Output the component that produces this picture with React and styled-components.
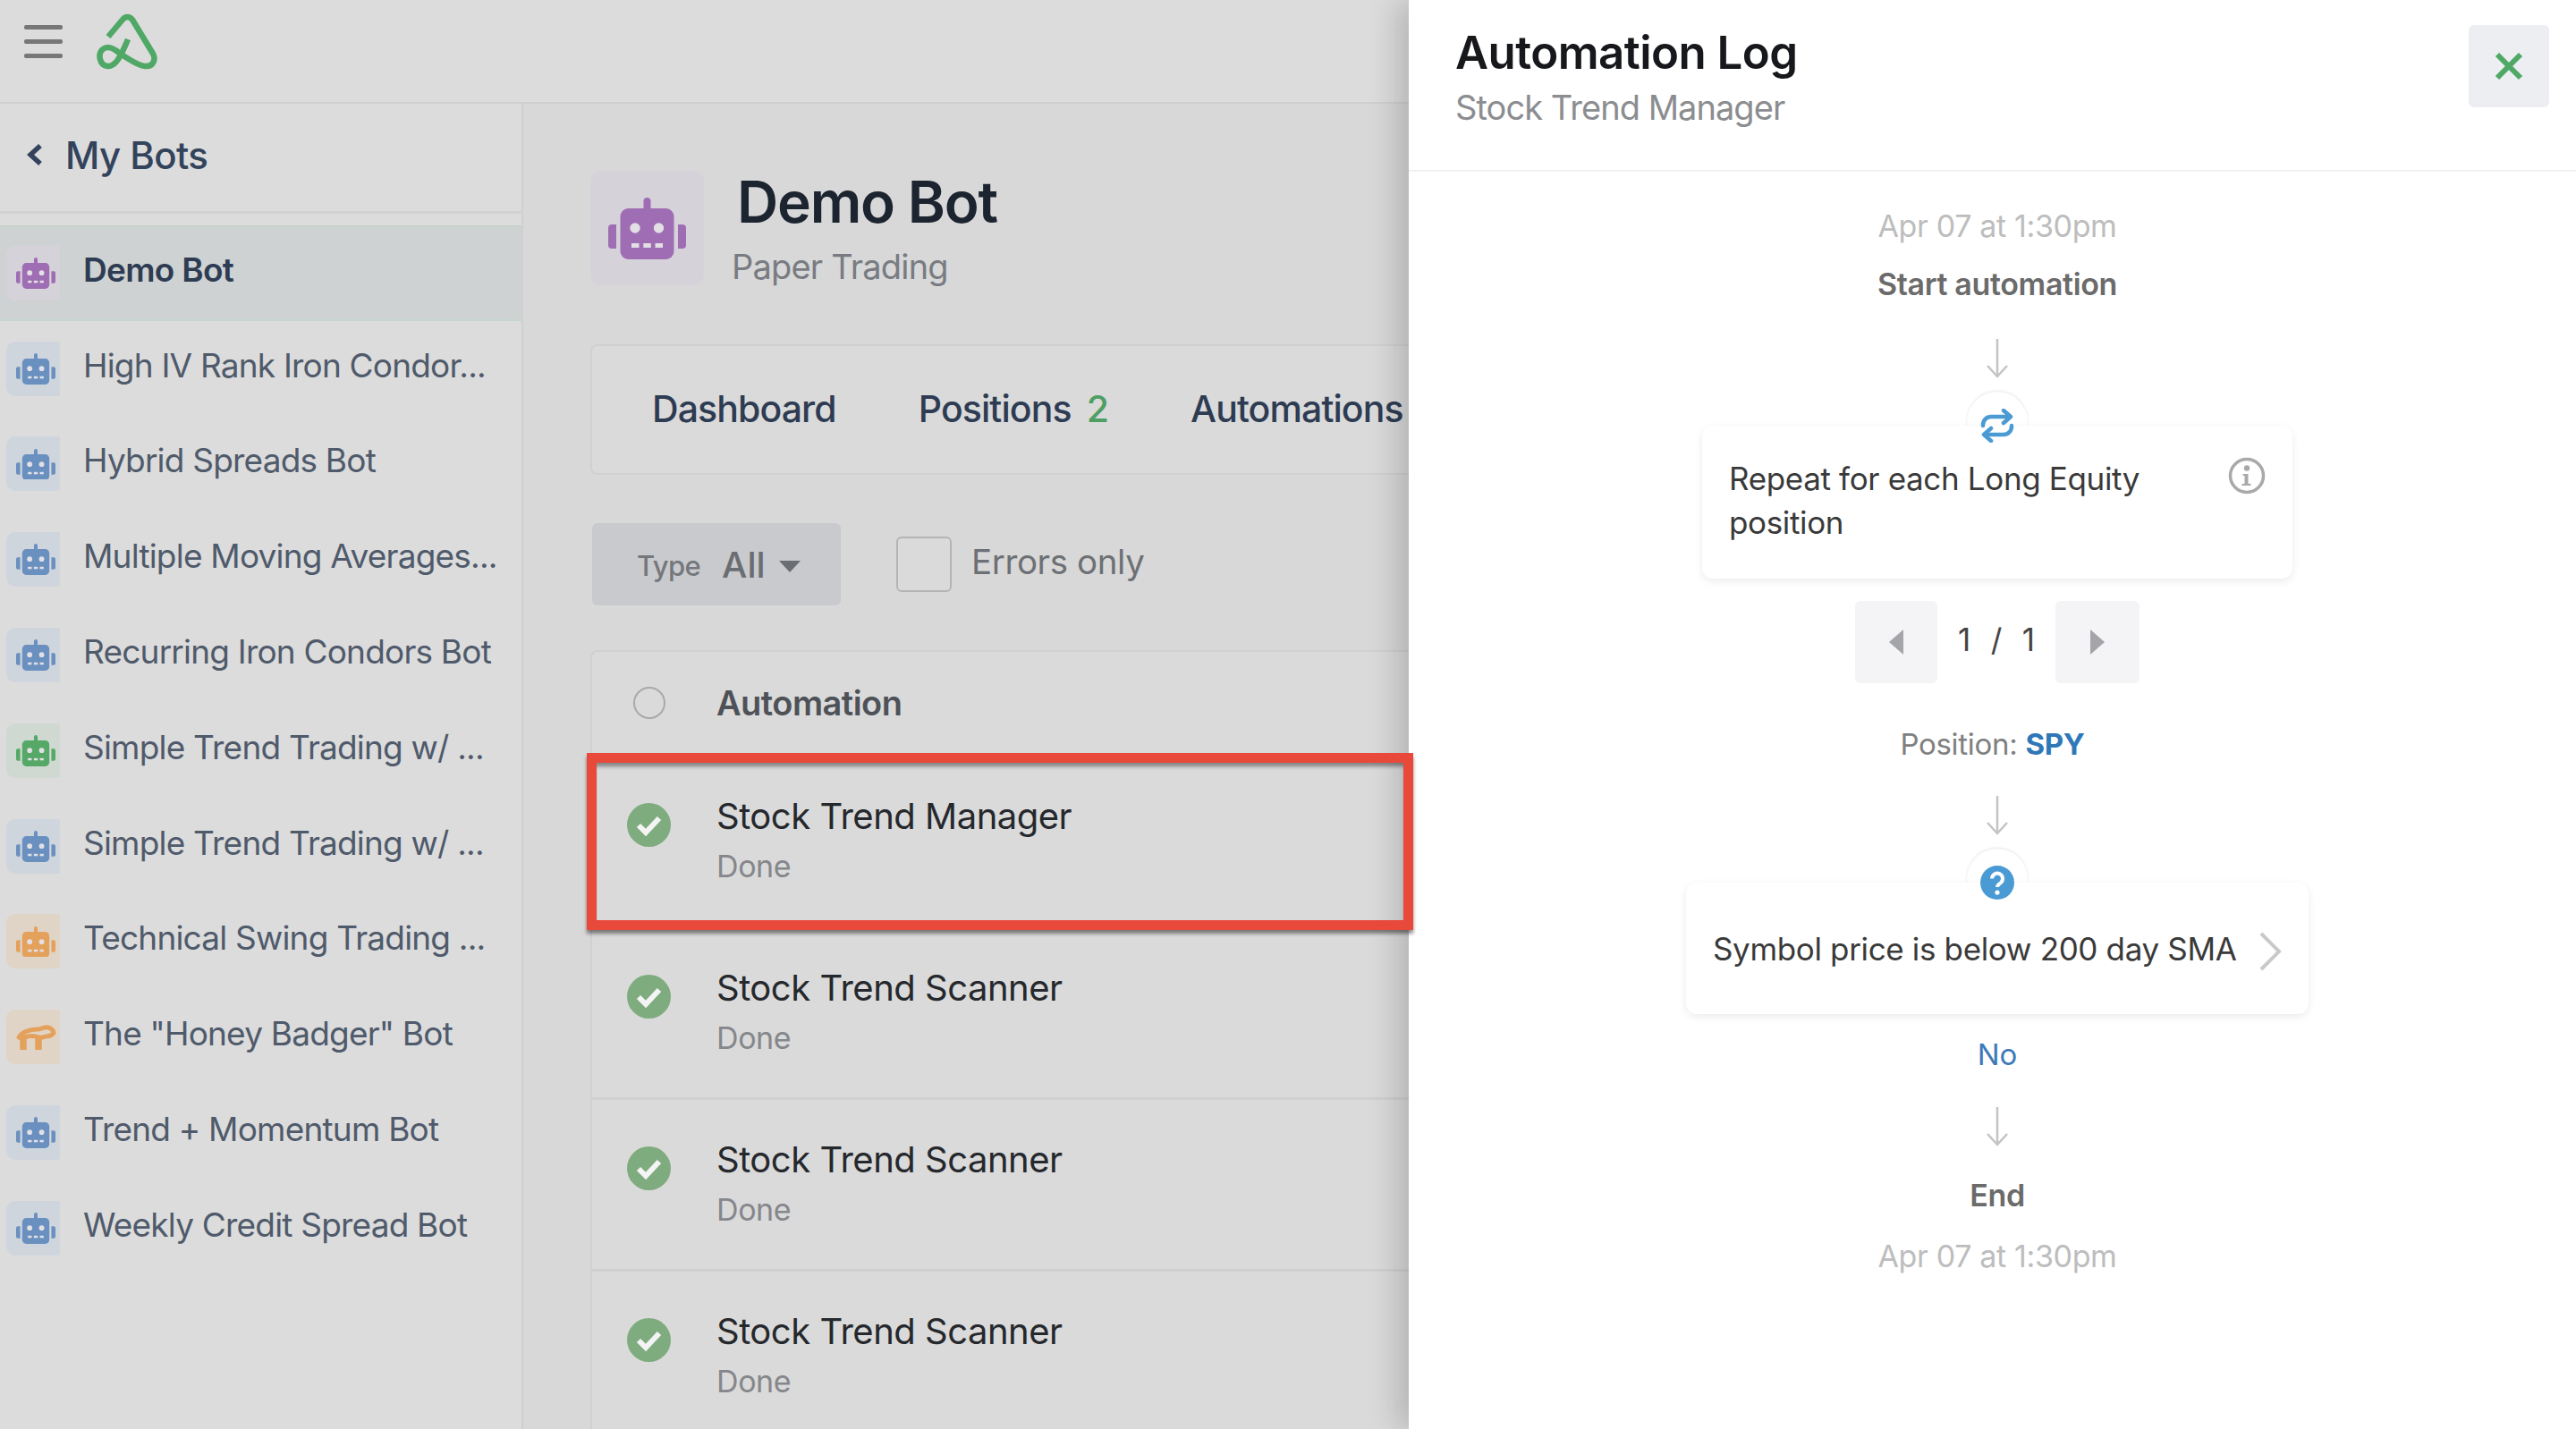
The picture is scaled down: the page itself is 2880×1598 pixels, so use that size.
import React from "react";
import styled, { createGlobalStyle } from "styled-components";

const GlobalStyle = createGlobalStyle`
  html, body { margin: 0; padding: 0; }
  body { font-family: "Inter", "Liberation Sans", sans-serif; background: #d8d8d8; }
  * { box-sizing: border-box; }
`;

const Page = styled.div`
  position: relative;
  width: 2880px;
  height: 1598px;
  overflow: hidden;
  display: flex;
  flex-direction: column;
  background: #d8d8d8;
`;

/* ---------- top bar ---------- */
const TopBar = styled.header`
  flex: none;
  height: 116px;
  display: flex;
  align-items: flex-start;
  background: #dcdcdc;
  border-bottom: 2px solid #cfcfcf;
  padding: 15px 0 0 27px;
  gap: 38px;
`;
const Burger = styled.div`
  width: 43px;
  margin-top: 13px;
  display: flex;
  flex-direction: column;
  gap: 11px;
  span { display: block; height: 5px; border-radius: 2px; background: #777; }
`;

/* ---------- layout ---------- */
const Body = styled.div`
  flex: 1;
  display: flex;
  min-height: 0;
`;
const Sidebar = styled.aside`
  flex: none;
  width: 585px;
  background: #dcdcdc;
  border-right: 2px solid #d0d0d0;
`;
const BackRow = styled.div`
  height: 123px;
  display: flex;
  align-items: center;
  gap: 25px;
  padding: 0 0 6px 30px;
  border-bottom: 3px solid #d2d2d2;
  color: #33435c;
  font-size: 42px;
  font-weight: 500;
  letter-spacing: -0.6px;
`;
const BotList = styled.div`
  padding-top: 13px;
  display: flex;
  flex-direction: column;
`;
const BotRow = styled.div`
  height: 106.8px;
  flex: none;
  display: flex;
  align-items: center;
  gap: 26px;
  padding-left: 7px;
  background: ${(p) => (p.$active ? "#ced2d3" : "transparent")};
  border-top: ${(p) => (p.$active ? "2px solid #c5d3cc" : "none")};
  border-bottom: ${(p) => (p.$active ? "2px solid #c5d6cd" : "none")};
  color: ${(p) => (p.$active ? "#2e3c53" : "#4f5a6b")};
  font-size: 37px;
  font-weight: ${(p) => (p.$active ? 600 : 400)};
  letter-spacing: ${(p) => (p.$active ? "-0.7px" : "-0.8px")};
  white-space: nowrap;
`;
const BotLabel = styled.span`
  padding-bottom: 8px;
`;
const Tile = styled.div`
  flex: none;
  width: ${(p) => (p.$big ? "127px" : "60px")};
  height: ${(p) => (p.$big ? "128px" : "61px")};
  border-radius: ${(p) => (p.$big ? "12px" : "10px 3px 3px 10px")};
  padding-left: ${(p) => (p.$big ? "0" : "6px")};
  display: flex;
  align-items: center;
  justify-content: center;
  background: ${(p) => p.$bg};
  color: ${(p) => p.$fg};
`;

/* ---------- main ---------- */
const Main = styled.main`
  flex: 1;
  min-width: 0;
  padding: 75px 0 0 75px;
  display: flex;
  flex-direction: column;
  background: #d8d8d8;
  & > * { flex: none; }
`;
const BotHead = styled.div`
  display: flex;
  align-items: center;
  gap: 32px;
  height: 128px;
`;
const BotTitles = styled.div`
  display: flex;
  flex-direction: column;
  gap: 19px;
  margin-top: 3px;
`;
const BotName = styled.h1`
  margin: 0 0 0 5px;
  font-size: 64px;
  line-height: 64px;
  font-weight: 600;
  letter-spacing: -1.2px;
  color: #1c2430;
`;
const BotMode = styled.div`
  font-size: 38px;
  line-height: 42px;
  margin-left: -1px;
  color: #787c82;
  letter-spacing: -0.8px;
`;
const TabsCard = styled.nav`
  margin-top: 66px;
  height: 146px;
  width: 1100px;
  display: flex;
  align-items: center;
  gap: 92px;
  padding: 0 0 2px 67px;
  background: #dadada;
  border: 2px solid #d0d0d0;
  border-radius: 8px;
  color: #2e3c53;
  font-size: 41px;
  font-weight: 500;
  letter-spacing: -0.9px;
  white-space: nowrap;
`;
const Tab = styled.span``;
const TabCount = styled.span`
  margin-left: 17px;
  color: #4f9e63;
`;
const Filters = styled.div`
  margin: 54px 0 0 2px;
  display: flex;
  align-items: center;
  gap: 62px;
`;
const TypeButton = styled.div`
  width: 278px;
  height: 92px;
  display: flex;
  align-items: center;
  padding-left: 50px;
  background: #c9cacd;
  border-radius: 6px;
  color: #74777b;
`;
const TypeLabel = styled.span`
  font-size: 31px;
  font-weight: 500;
  letter-spacing: -0.6px;
  margin-top: 3px;
`;
const TypeValue = styled.span`
  margin: 0 15px 0 24px;
  font-size: 40px;
  font-weight: 500;
  color: #6a6d72;
`;
const Caret = styled.i`
  width: 0;
  height: 0;
  margin-top: 5px;
  border-left: 12px solid transparent;
  border-right: 12px solid transparent;
  border-top: 13px solid #6a6d72;
`;
const CheckWrap = styled.label`
  display: flex;
  align-items: center;
  gap: 22px;
  color: #6d7075;
  font-size: 38.5px;
  letter-spacing: -0.4px;
`;
const CheckBox = styled.span`
  width: 62px;
  height: 62px;
  border: 2px solid #b5b5b5;
  border-radius: 6px;
  background: #dadada;
`;
const CheckLabel = styled.span`
  padding-bottom: 6px;
`;
const Table = styled.section`
  margin-top: 50px;
  width: 1100px;
  background: #dadada;
  border: 2px solid #d0d0d0;
  border-radius: 8px 8px 0 0;
`;
const TableHead = styled.div`
  height: 117px;
  display: flex;
  align-items: center;
  gap: 57px;
  padding: 0 0 4px 46px;
  color: #4e5258;
  font-size: 38px;
  font-weight: 600;
  letter-spacing: -0.55px;
`;
const Radio = styled.span`
  width: 36px;
  height: 36px;
  border-radius: 50%;
  border: 2px solid #a9a9a9;
`;
const Row = styled.div`
  position: relative;
  height: 192px;
  display: flex;
  align-items: flex-start;
  gap: 51px;
  padding: 52px 0 0 39px;
  border-bottom: 3px solid #d0d0d0;
`;
const Highlight = styled.div`
  position: absolute;
  z-index: 3;
  left: -6px;
  top: -4px;
  width: 924px;
  height: 198px;
  border: 11px solid #e8493a;
  box-shadow: 0 4px 4px rgba(0, 0, 0, 0.45), inset 0 6px 4px -2px rgba(0, 0, 0, 0.4);
`;
const RowText = styled.div`
  display: flex;
  flex-direction: column;
  gap: 12px;
`;
const RowTitle = styled.div`
  margin-top: -9px;
  font-size: 40px;
  line-height: 48px;
  color: #25282c;
  letter-spacing: -0.5px;
`;
const RowSub = styled.div`
  font-size: 34px;
  line-height: 40px;
  color: #85878b;
  letter-spacing: -0.4px;
`;

/* ---------- drawer ---------- */
const Drawer = styled.aside`
  position: absolute;
  z-index: 2;
  top: 0;
  right: 0;
  width: 1305px;
  height: 100%;
  background: #fff;
  box-shadow: -12px 0 32px rgba(0, 0, 0, 0.18);
  display: flex;
  flex-direction: column;
`;
const DrawerHead = styled.div`
  flex: none;
  height: 192px;
  display: flex;
  justify-content: space-between;
  align-items: flex-start;
  padding: 28px 30px 0 52px;
  border-bottom: 2px solid #f1f1f1;
`;
const DrawerTitle = styled.h2`
  margin: 3px 0 0;
  font-size: 51px;
  line-height: 56px;
  font-weight: 600;
  letter-spacing: -0.55px;
  color: #16181c;
`;
const DrawerSub = styled.div`
  margin-top: 10px;
  font-size: 38px;
  line-height: 46px;
  letter-spacing: -0.95px;
  color: #8b8d90;
`;
const CloseButton = styled.button`
  width: 90px;
  height: 92px;
  border: 0;
  border-radius: 6px;
  background: #edeef1;
  color: #4fa866;
  display: flex;
  align-items: center;
  justify-content: center;
  padding: 0;
`;
const Flow = styled.div`
  display: flex;
  flex-direction: column;
  align-items: center;
  padding: 41px 0 0 11px;
  color: #333;
`;
const Stamp = styled.div`
  font-size: 34px;
  line-height: 40px;
  letter-spacing: -0.35px;
  color: #bdbdbd;
  margin-top: ${(p) => p.$mt || 0}px;
`;
const Step = styled.div`
  font-size: 34px;
  line-height: 40px;
  font-weight: 600;
  letter-spacing: -0.35px;
  color: #6b6b6b;
  margin-top: ${(p) => p.$mt || 0}px;
`;
const ArrowBox = styled.div`
  height: 44px;
  margin-top: ${(p) => p.$mt || 0}px;
  color: #c4c4c4;
  display: flex;
`;
const CardWrap = styled.div`
  position: relative;
  margin-top: ${(p) => p.$mt || 0}px;
`;
const Bump = styled.div`
  position: absolute;
  left: 50%;
  top: -38px;
  width: 68px;
  height: 68px;
  margin-left: -34px;
  border-radius: 50%;
  background: #fff;
  box-shadow: 0 -1px 3px rgba(0, 0, 0, 0.1);
`;
const BumpIcon = styled.div`
  position: absolute;
  z-index: 1;
  left: 50%;
  top: -19px;
  width: 38px;
  height: 38px;
  margin-left: -19px;
  display: flex;
`;
const Card = styled.div`
  position: relative;
  width: ${(p) => p.$w}px;
  height: ${(p) => p.$h}px;
  background: #fff;
  border-radius: 12px;
  box-shadow: 0 3px 10px rgba(0, 0, 0, 0.08);
  display: flex;
  justify-content: space-between;
  align-items: flex-start;
  padding: ${(p) => p.$pad};
  font-size: 35px;
  line-height: 49px;
  letter-spacing: -0.35px;
  color: #3a3a3a;
`;
const CardText = styled.div`
  width: 480px;
`;
const SingleLine = styled.div`
  white-space: nowrap;
`;
const InfoIcon = styled.span`
  display: flex;
  color: #a9a9a9;
`;
const Chevron = styled.span`
  display: flex;
  color: #c9c9c9;
  margin-top: 5px;
`;
const Pager = styled.div`
  margin-top: 25px;
  display: flex;
  align-items: center;
  height: 92px;
`;
const PagerButton = styled.div`
  width: ${(p) => p.$w}px;
  height: 92px;
  border-radius: 6px;
  background: #f4f4f6;
  display: flex;
  align-items: center;
  justify-content: center;
`;
const PagerTri = styled.i`
  width: 0;
  height: 0;
  border-top: 14px solid transparent;
  border-bottom: 14px solid transparent;
  ${(p) => (p.$left ? "border-right" : "border-left")}: 16px solid #a3a5a9;
`;
const PagerCount = styled.div`
  width: 132px;
  display: flex;
  justify-content: space-between;
  padding: 0 23px 6px 23px;
  font-size: 35px;
  color: #444;
`;
const PositionLine = styled.div`
  margin: 48px 11px 0 0;
  font-size: 33px;
  line-height: 40px;
  letter-spacing: -0.3px;
  color: #808080;
  b { font-weight: 700; color: #2f78b8; }
`;
const NoLabel = styled.div`
  margin-top: 25px;
  font-size: 33px;
  line-height: 40px;
  color: #3d7ab8;
`;

/* ---------- drawings ---------- */
const Robot = ({ w = 44 }) => (
  <svg width={w} height={w * (69 / 87)} viewBox="0 0 87 69">
    <rect x="39.5" y="0" width="8" height="16" rx="4" fill="currentColor" />
    <rect x="13.5" y="12" width="60" height="57" rx="9" fill="currentColor" />
    <path d="M9 30H4a4 4 0 0 0-4 4v19a4 4 0 0 0 4 4h5z" fill="currentColor" />
    <path d="M78 30h5a4 4 0 0 1 4 4v19a4 4 0 0 1-4 4h-5z" fill="currentColor" />
    <circle cx="30" cy="34" r="5.7" fill="#e2dfe5" />
    <circle cx="56.5" cy="34" r="5.7" fill="#e2dfe5" />
    <rect x="26" y="51" width="8.5" height="5" fill="#e2dfe5" />
    <rect x="39.3" y="51" width="8.5" height="5" fill="#e2dfe5" />
    <rect x="52.5" y="51" width="8.5" height="5" fill="#e2dfe5" />
  </svg>
);
const Badger = () => (
  <svg width="45" height="28" viewBox="0 0 45 28" fill="none" stroke="currentColor" strokeLinejoin="round">
    <path d="M3 14C6 9 14 5 24 5C28 5 32 2 36 3C40 4 42 7 42 9C40 12 36 13 33 13C30 14 28 15 26 14C20 12 15 12 10 14C8 15 5 15 3 14Z" strokeWidth="5" />
    <path d="M8 14v14M25 14v14" strokeWidth="7.5" />
  </svg>
);
const Logo = () => (
  <svg width="70" height="64" viewBox="108 13 70 64" fill="none" stroke="#4fa866" strokeWidth="6.5" strokeLinecap="butt" strokeLinejoin="round">
    <path d="M121 39L137 20C140 16 145 16 148 20L171 58C175 66 170 73 162 72C153 71 142 63 133 57C127 52 120 49 115 53C109 58 111 71 120 72C128 73 134 64 143 42" />
  </svg>
);
const BackChevron = () => (
  <svg width="18" height="26" viewBox="0 0 18 26" fill="none" stroke="currentColor" strokeWidth="5.5">
    <path d="M15 3L4 13l11 10" />
  </svg>
);
const CheckCircle = () => (
  <svg width="49" height="49" viewBox="0 0 49 49">
    <circle cx="24.5" cy="24.5" r="24.5" fill="#7fac7f" />
    <path d="M13 25l8 8 15-16" fill="none" stroke="#f4f4f4" strokeWidth="6" />
  </svg>
);
const DownArrow = () => (
  <svg width="26" height="44" viewBox="0 0 26 44" fill="none" stroke="currentColor" strokeWidth="2.5">
    <path d="M13 0v42M2 30l11 12 11-12" />
  </svg>
);
const CloseX = () => (
  <svg width="32" height="32" viewBox="0 0 32 32" fill="none" stroke="currentColor" strokeWidth="6">
    <path d="M3 3l26 26M29 3L3 29" />
  </svg>
);
const RepeatIcon = () => (
  <svg width="38" height="38" viewBox="0 0 38 38" fill="none" stroke="#4a9bd4" strokeWidth="4.5" strokeLinecap="round" strokeLinejoin="round">
    <path d="M3 19v-1a9 9 0 0 1 9-9h21" />
    <path d="M26 2l8 7-8 7" />
    <path d="M35 19v1a9 9 0 0 1-9 9H5" />
    <path d="M12 22l-8 7 8 7" />
  </svg>
);
const QuestionIcon = () => (
  <svg width="38" height="38" viewBox="0 0 38 38">
    <circle cx="19" cy="19" r="19" fill="#4a9bd4" />
    <path d="M13 14.5a6 6 0 1 1 9.5 5c-2 1.4-3.5 2.4-3.5 4.5" fill="none" stroke="#fff" strokeWidth="4" />
    <circle cx="19" cy="30" r="2.6" fill="#fff" />
  </svg>
);
const Info = () => (
  <svg width="42" height="42" viewBox="0 0 42 42" fill="none">
    <circle cx="21" cy="21" r="18.5" stroke="currentColor" strokeWidth="3.5" />
    <circle cx="21" cy="12.5" r="3.2" fill="currentColor" />
    <path d="M16.5 19h6v11h3v2h-10v-2h3v-9h-2z" fill="currentColor" />
  </svg>
);
const RightChevron = () => (
  <svg width="26" height="44" viewBox="0 0 26 44" fill="none" stroke="currentColor" strokeWidth="4">
    <path d="M3 2l20 20L3 42" />
  </svg>
);

const TILES = {
  purple: { bg: "#d6d2da", fg: "#9f6db3" },
  blue: { bg: "#cfd5dd", fg: "#6a90c0" },
  green: { bg: "#cfd9d2", fg: "#55a866" },
  orange: { bg: "#e0d4c7", fg: "#e3a15c" },
};

const BOTS = [
  { name: "Demo Bot", tone: "purple", active: true },
  { name: "High IV Rank Iron Condor...", tone: "blue" },
  { name: "Hybrid Spreads Bot", tone: "blue" },
  { name: "Multiple Moving Averages...", tone: "blue" },
  { name: "Recurring Iron Condors Bot", tone: "blue" },
  { name: "Simple Trend Trading w/ ...", tone: "green" },
  { name: "Simple Trend Trading w/ ...", tone: "blue" },
  { name: "Technical Swing Trading ...", tone: "orange" },
  { name: 'The "Honey Badger" Bot', tone: "orange", badger: true },
  { name: "Trend + Momentum Bot", tone: "blue" },
  { name: "Weekly Credit Spread Bot", tone: "blue" },
];

const AUTOMATIONS = ["Stock Trend Manager", "Stock Trend Scanner", "Stock Trend Scanner", "Stock Trend Scanner"];

export default function App() {
  return (
    <Page>
      <GlobalStyle />
      <TopBar>
        <Burger><span /><span /><span /></Burger>
        <Logo />
      </TopBar>
      <Body>
        <Sidebar>
          <BackRow><BackChevron />My Bots</BackRow>
          <BotList>
            {BOTS.map((b, i) => (
              <BotRow key={i} $active={b.active}>
                <Tile $bg={TILES[b.tone].bg} $fg={TILES[b.tone].fg}>
                  {b.badger ? <Badger /> : <Robot />}
                </Tile>
                <BotLabel>{b.name}</BotLabel>
              </BotRow>
            ))}
          </BotList>
        </Sidebar>
        <Main>
          <BotHead>
            <Tile $big $bg={TILES.purple.bg} $fg={TILES.purple.fg}><Robot w={87} /></Tile>
            <BotTitles>
              <BotName>Demo Bot</BotName>
              <BotMode>Paper Trading</BotMode>
            </BotTitles>
          </BotHead>
          <TabsCard>
            <Tab>Dashboard</Tab>
            <Tab>Positions<TabCount>2</TabCount></Tab>
            <Tab>Automations</Tab>
          </TabsCard>
          <Filters>
            <TypeButton>
              <TypeLabel>Type</TypeLabel>
              <TypeValue>All</TypeValue>
              <Caret />
            </TypeButton>
            <CheckWrap><CheckBox /><CheckLabel>Errors only</CheckLabel></CheckWrap>
          </Filters>
          <Table>
            <TableHead><Radio />Automation</TableHead>
            {AUTOMATIONS.map((name, i) => (
              <Row key={i}>
                {i === 0 && <Highlight />}
                <CheckCircle />
                <RowText>
                  <RowTitle>{name}</RowTitle>
                  <RowSub>Done</RowSub>
                </RowText>
              </Row>
            ))}
          </Table>
        </Main>
      </Body>
      <Drawer>
        <DrawerHead>
          <div>
            <DrawerTitle>Automation Log</DrawerTitle>
            <DrawerSub>Stock Trend Manager</DrawerSub>
          </div>
          <CloseButton><CloseX /></CloseButton>
        </DrawerHead>
        <Flow>
          <Stamp>Apr 07 at 1:30pm</Stamp>
          <Step $mt={25}>Start automation</Step>
          <ArrowBox $mt={41}><DownArrow /></ArrowBox>
          <CardWrap $mt={53}>
            <Bump />
            <BumpIcon><RepeatIcon /></BumpIcon>
            <Card $w={660} $h={171} $pad="35px 30px 0 30px">
              <CardText>Repeat for each Long Equity position</CardText>
              <InfoIcon><Info /></InfoIcon>
            </Card>
          </CardWrap>
          <Pager>
            <PagerButton $w={92}><PagerTri $left /></PagerButton>
            <PagerCount><span>1</span><span>/</span><span>1</span></PagerCount>
            <PagerButton $w={94}><PagerTri /></PagerButton>
          </Pager>
          <PositionLine>Position: <b>SPY</b></PositionLine>
          <ArrowBox $mt={38}><DownArrow /></ArrowBox>
          <CardWrap $mt={53}>
            <Bump />
            <BumpIcon><QuestionIcon /></BumpIcon>
            <Card $w={696} $h={147} $pad="50px 30px 0 30px">
              <SingleLine>Symbol price is below 200 day SMA</SingleLine>
              <Chevron><RightChevron /></Chevron>
            </Card>
          </CardWrap>
          <NoLabel>No</NoLabel>
          <ArrowBox $mt={39}><DownArrow /></ArrowBox>
          <Step $mt={35}>End</Step>
          <Stamp $mt={28}>Apr 07 at 1:30pm</Stamp>
        </Flow>
      </Drawer>
    </Page>
  );
}
